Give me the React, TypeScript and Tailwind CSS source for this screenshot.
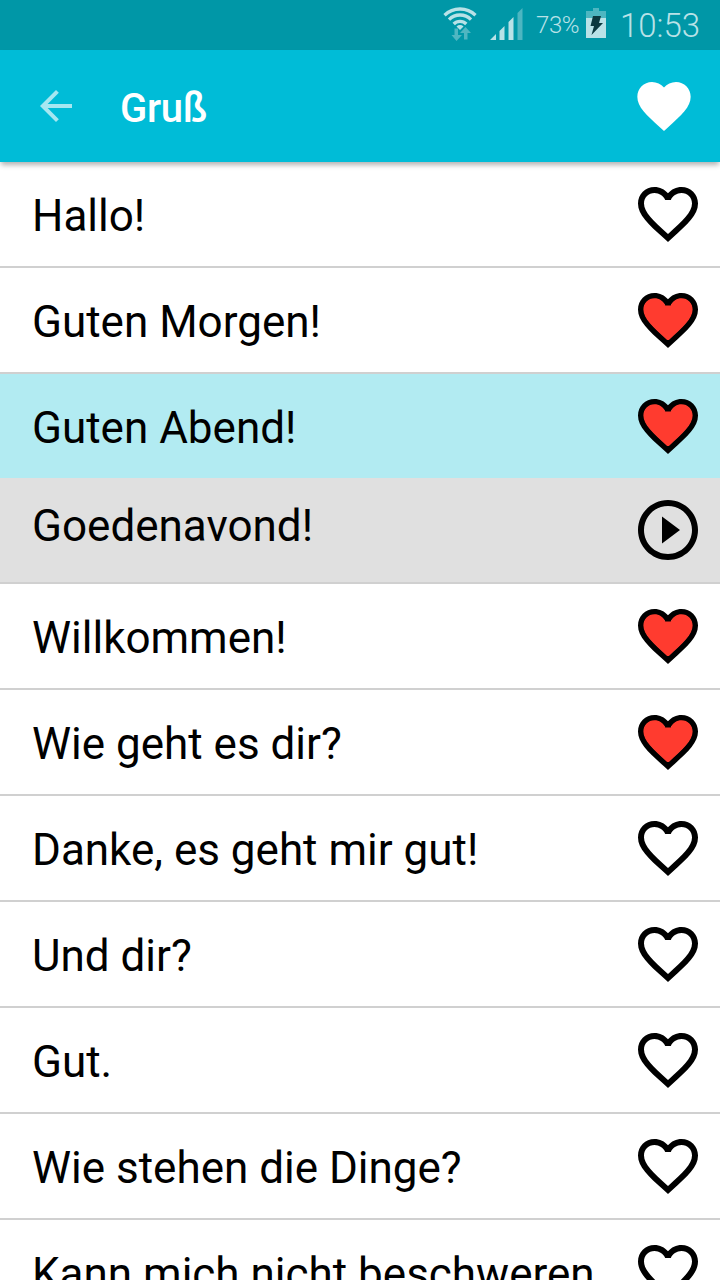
type Phrase = {
  text: string;
  liked?: boolean;
  translation?: string;
};

const phrases: Phrase[] = [
  { text: "Hallo!" },
  { text: "Guten Morgen!", liked: true },
  { text: "Guten Abend!", liked: true, translation: "Goedenavond!" },
  { text: "Willkommen!", liked: true },
  { text: "Wie geht es dir?", liked: true },
  { text: "Danke, es geht mir gut!" },
  { text: "Und dir?" },
  { text: "Gut." },
  { text: "Wie stehen die Dinge?" },
  { text: "Kann mich nicht beschweren." },
];

const HEART =
  "M12 21.35l-1.45-1.32C5.4 15.36 2 12.28 2 8.5 2 5.42 4.42 3 7.5 3c1.74 0 3.41.81 4.5 2.09C13.09 3.81 14.76 3 16.5 3 19.58 3 22 5.42 22 8.5c0 3.78-3.4 6.86-8.55 11.54L12 21.35z";
const HEART_BORDER =
  "M16.5 3c-1.74 0-3.41.81-4.5 2.09C10.91 3.81 9.24 3 7.5 3 4.42 3 2 5.42 2 8.5c0 3.78 3.4 6.86 8.55 11.54L12 21.35l1.45-1.32C18.6 15.36 22 12.28 22 8.5 22 5.42 19.58 3 16.5 3zm-4.4 15.55l-.1.1-.1-.1C7.14 14.24 4 11.39 4 8.5 4 6.5 5.5 5 7.5 5c1.54 0 3.04.99 3.57 2.36h1.87C13.46 5.99 14.96 5 16.5 5c2 0 3.5 1.5 3.5 3.5 0 2.89-3.14 5.74-7.9 10.05z";

function HeartIcon({ liked }: { liked?: boolean }) {
  return (
    <svg viewBox="0 0 24 24" className="size-18 shrink-0">
      <path d={HEART_BORDER} />
      {liked && (
        <path
          d="M11.700 18.700C7 14.300 3.800 11.500 3.800 8.500c0-2.100 1.600-3.750 3.700-3.750 1.500 0 3 .9 3.570 2.400h1.870c.56-1.500 2.060-2.400 3.560-2.400 2.100 0 3.700 1.650 3.700 3.750 0 3-3.200 5.800-7.900 10.200z"
          fill="#ff3b2f"
        />
      )}
    </svg>
  );
}

function StatusBar() {
  return (
    <div className="flex h-[50px] items-center bg-[#0097a7] pl-[443px] text-[#b9e2e7]">
      <svg viewBox="0 0 34 36" className="h-9 w-[34px] shrink-0">
        <g fill="none" stroke="currentColor" strokeWidth="3.3">
          <path d="M1.500 8.200a22.500 22.500 0 0 1 31 0" />
          <path d="M6 12.600a15.500 15.500 0 0 1 22 0" />
          <path d="M10.700 17a8.800 8.800 0 0 1 12.600 0" />
        </g>
        <path d="M13.500 19.500a5 5 0 0 1 7 0L17 23z" fill="currentColor" />
        <g fill="#4fb6c1">
          <path d="M11.500 21.500h3.500v6.500h4L13.500 34 8.500 28h3z" />
          <path d="M22.500 20l5.500 6h-3.500v6.500h-3.500V26h-4z" />
        </g>
      </svg>
      <svg viewBox="0 0 34 32" className="mb-0.5 ml-[13px] h-8 w-[34px] shrink-0" fill="currentColor">
        <path d="M0 32l6-6v6zM9.500 23l5-5v14h-5zM18.500 14l5-5v23h-5z" />
        <path d="M27.500 5l5-5v32h-5z" fill="#4db6c1" />
      </svg>
      <span className="ml-3 w-[45px] whitespace-nowrap text-2xl leading-none font-light tracking-[-0.4px]">
        73%
      </span>
      <svg viewBox="0 0 20 30" className="mb-1 ml-[5px] h-[30px] w-5 shrink-0">
        <path d="M0 3h7V0h6v3h7v7H0z" fill="#4db6c1" />
        <path d="M0 10h20v20H0z" fill="currentColor" />
        <path d="M7 8h8l-2 7h4L5.500 27l2.500-9H4.500z" fill="#0b3940" />
      </svg>
      <span className="ml-3.5 whitespace-nowrap text-[33px] leading-none font-light">10:53</span>
    </div>
  );
}

function Toolbar() {
  return (
    <header className="relative flex h-28 items-center bg-[#00bcd7] pr-6 pl-8 text-white shadow-[0_4px_5px_-1px_rgba(0,0,0,0.3)]">
      <svg viewBox="0 0 24 24" className="size-12 fill-[#a6e7f1]">
        <path d="M20 11H7.830l5.590-5.590L12 4l-8 8 8 8 1.410-1.410L7.830 13H20v-2z" />
      </svg>
      <h1 className="ml-10 flex-1 pt-1.5 text-[40px] leading-none font-medium tracking-[-0.3px]">Gruß</h1>
      <svg viewBox="0 0 24 24" className="size-16 fill-white">
        <path d={HEART} />
      </svg>
    </header>
  );
}

function PhraseRow({ text, liked, translation }: Phrase) {
  return (
    <li className="border-b-2 border-[#d0d0d0]">
      <div className={`flex h-26 items-center pr-4 pl-8 ${translation ? "bg-[#b2ebf2]" : "bg-white"}`}>
        <span className="flex-1 pt-1 whitespace-nowrap">{text}</span>
        <HeartIcon liked={liked} />
      </div>
      {translation && (
        <div className="flex h-26 items-center bg-[#e0e0e0] pr-4 pl-8">
          <span className="flex-1 pb-2">{translation}</span>
          <svg viewBox="0 0 24 24" className="size-18 shrink-0">
            <path d="M10 16.500l6-4.500-6-4.500v9zM12 2C6.480 2 2 6.480 2 12s4.480 10 10 10 10-4.480 10-10S17.520 2 12 2zm0 18c-4.410 0-8-3.590-8-8s3.590-8 8-8 8 3.590 8 8-3.590 8-8 8z" />
          </svg>
        </div>
      )}
    </li>
  );
}

export default function App() {
  return (
    <div className="flex h-screen flex-col overflow-hidden bg-white font-[Roboto,sans-serif] text-black">
      <div className="shrink-0">
        <StatusBar />
        <Toolbar />
      </div>
      <ul className="min-h-0 flex-1 overflow-hidden text-[44px] leading-none">
        {phrases.map((phrase) => (
          <PhraseRow key={phrase.text} {...phrase} />
        ))}
      </ul>
    </div>
  );
}
